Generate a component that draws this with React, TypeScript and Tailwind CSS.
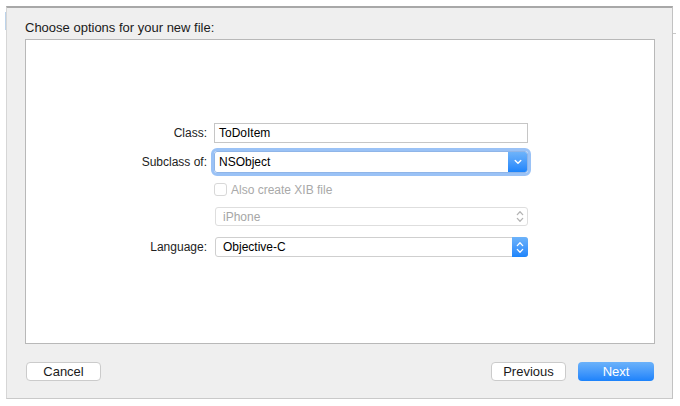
import React from "react";

const font = { fontFamily: '"Liberation Sans", Arial, sans-serif' };

function ChevronDown() {
  return (
    <svg width="8" height="6" viewBox="0 0 8 6">
      <path d="M1.2 1.5 L4 4.3 L6.8 1.5" fill="none" stroke="white" strokeWidth="1.4" strokeLinecap="round" strokeLinejoin="round" />
    </svg>
  );
}

function UpDown({ color }: { color: string }) {
  return (
    <svg width="8" height="13" viewBox="0 0 8 13">
      <path d="M1.3 4.6 L4 1.8 L6.7 4.6" fill="none" stroke={color} strokeWidth="1.3" strokeLinecap="round" strokeLinejoin="round" />
      <path d="M1.3 8.4 L4 11.2 L6.7 8.4" fill="none" stroke={color} strokeWidth="1.3" strokeLinecap="round" strokeLinejoin="round" />
    </svg>
  );
}

function Label({ children }: { children: React.ReactNode }) {
  return <div className="w-[181px] text-right text-[12px] text-[#222]">{children}</div>;
}

export default function App() {
  return (
    <div className="w-[680px] h-[406px] bg-white relative overflow-hidden" style={font}>
      <div className="absolute left-[5px] top-[12px] w-[1px] h-[18px] bg-[#bcd3ea]" />
      <div className="absolute left-[673px] top-[33px] w-[3px] h-[1px] bg-[#c8c8c8]" />
      <div className="ml-[6px] pt-[6px]">
        <div className="w-[667px] h-[393px] bg-[#efefef] border-t-2 border-t-[#a8a8a8] border-l border-l-[#d6d6d6] border-r border-r-[#c2c2c2] border-b border-b-[#c9c9c9] flex flex-col">
          <div className="pl-[18px] pt-[12px] text-[13px] leading-[16px] text-[#1a1a1a]">
            Choose options for your new file:
          </div>
          <div className="ml-[18px] mt-[3px] w-[630px] h-[305px] bg-white border border-[#b8b8b8] flex flex-col pt-[83px]">
            {/* Class */}
            <div className="flex items-center gap-[7px] h-[20px]">
              <Label>Class:</Label>
              <div className="w-[314px] h-[20px] border border-[#c6c6c6] bg-white flex items-center pl-[4px] text-[12px] text-black">
                ToDoItem
              </div>
            </div>
            {/* Subclass */}
            <div className="flex items-center gap-[7px] h-[22px] mt-[8px]">
              <Label>Subclass of:</Label>
              <div className="w-[314px] h-[22px] rounded-[3px] bg-white flex items-center text-[12px] text-black outline-[3px] outline-solid outline-[#9ac2f6] border border-[#8fb5e8]">
                <span className="flex-1 pl-[4px]">NSObject</span>
                <div className="w-[19px] h-[20px] rounded-r-[2px] bg-gradient-to-b from-[#6db3fa] to-[#1b84fb] flex items-center justify-center">
                  <ChevronDown />
                </div>
              </div>
            </div>
            {/* Checkbox */}
            <div className="flex items-center gap-[7px] h-[13px] mt-[10px]">
              <div className="w-[181px]" />
              <div className="flex items-center gap-[4px]">
                <div className="w-[13px] h-[13px] rounded-[3px] border border-[#d8d8d8] bg-white" />
                <span className="text-[12px] text-[#a9a9a9]">Also create XIB file</span>
              </div>
            </div>
            {/* iPhone */}
            <div className="flex items-center gap-[7px] h-[19px] mt-[11px]">
              <div className="w-[181px]" />
              <div className="w-[313px] ml-[1px] h-[19px] rounded-[3px] border border-[#dedede] bg-white flex items-center text-[12px] text-[#a6a6a6]">
                <span className="flex-1 pl-[7px]">iPhone</span>
                <div className="w-[15px] flex items-center justify-center">
                  <UpDown color="#b4b4b4" />
                </div>
              </div>
            </div>
            {/* Language */}
            <div className="flex items-center gap-[7px] h-[20px] mt-[11px]">
              <Label>Language:</Label>
              <div className="w-[313px] ml-[1px] h-[20px] rounded-[3px] border border-[#cfcfcf] bg-white flex items-center text-[12px] text-black">
                <span className="flex-1 pl-[7px]">Objective-C</span>
                <div className="w-[16px] h-[20px] -mr-[1px] rounded-r-[3px] bg-gradient-to-b from-[#6db3fa] to-[#1b84fb] flex items-center justify-center">
                  <UpDown color="white" />
                </div>
              </div>
            </div>
          </div>
          <div className="flex items-center mt-[18px] pl-[19px] pr-[18px]">
            <div className="w-[75px] h-[19px] rounded-[4px] bg-white border border-[#cbcbcb] flex items-center justify-center text-[13px] text-[#1a1a1a]">
              Cancel
            </div>
            <div className="flex-1" />
            <div className="w-[75px] h-[19px] rounded-[4px] bg-white border border-[#cbcbcb] flex items-center justify-center text-[13px] text-[#1a1a1a]">
              Previous
            </div>
            <div className="w-[76px] h-[19px] ml-[12px] rounded-[4px] bg-gradient-to-b from-[#6bb2fa] to-[#1a82fb] flex items-center justify-center text-[13px] text-white">
              Next
            </div>
          </div>
        </div>
      </div>
    </div>
  );
}
